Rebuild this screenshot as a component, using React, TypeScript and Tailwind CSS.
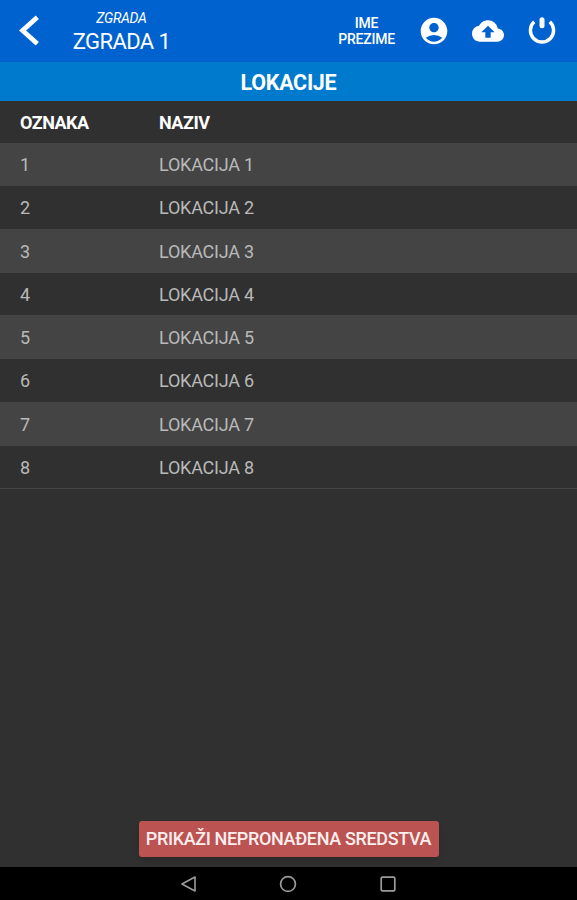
import React from "react";
import { MdAccountCircle, MdCloudUpload } from "react-icons/md";

const locations = [
  { id: 1, name: "LOKACIJA 1" },
  { id: 2, name: "LOKACIJA 2" },
  { id: 3, name: "LOKACIJA 3" },
  { id: 4, name: "LOKACIJA 4" },
  { id: 5, name: "LOKACIJA 5" },
  { id: 6, name: "LOKACIJA 6" },
  { id: 7, name: "LOKACIJA 7" },
  { id: 8, name: "LOKACIJA 8" },
];

const Header: React.FC = () => (
  <header className="flex h-[62px] shrink-0 items-center bg-[#0062cf] text-white">
    <button className="ml-[19px] shrink-0" aria-label="Natrag">
      <svg width="22" height="34" viewBox="0 0 22 34" fill="none" className="block">
        <path d="M18.3 3.2 3.6 16.5 18.3 29.8" stroke="currentColor" strokeWidth="4.8" />
      </svg>
    </button>

    <div className="ml-8 flex w-[97px] flex-col items-center pt-[3px] whitespace-nowrap">
      <span className="text-[14px] leading-[18px] tracking-[-0.3px] italic">ZGRADA</span>
      <span className="text-[22px] leading-[30px] tracking-[-0.6px]">ZGRADA 1</span>
    </div>

    <div className="mr-[19px] ml-auto flex items-center">
      <div className="mr-[23px] text-center text-[14px] leading-4 font-medium tracking-[-0.2px]">
        IME
        <br />
        PREZIME
      </div>
      <MdAccountCircle className="mr-[22px] h-8 w-8" />
      <MdCloudUpload className="mr-[22px] h-8 w-8" />
      {/* Power */}
      <svg width="32" height="32" viewBox="0 0 32 32" fill="none" stroke="currentColor">
        <path d="M8.2 6.8a11.6 11.6 0 1 0 15.6 0" strokeWidth="3.4" />
        <path d="M16 4.7v6" strokeWidth="5" strokeLinecap="round" />
      </svg>
    </div>
  </header>
);

const LocationTable: React.FC = () => (
  <div className="text-[18px]">
    <div className="flex h-[42.5px] items-center pt-[2px] pl-5 font-bold tracking-[-0.5px] text-white">
      <div className="w-[139px]">OZNAKA</div>
      <div>NAZIV</div>
    </div>
    {locations.map((location) => (
      <div
        key={location.id}
        className="flex h-[43.25px] items-center border-b border-[#444444] pt-[1px] pl-5 tracking-[-0.22px] text-[#b9b9b9] odd:bg-[#303030] even:bg-[#444444]"
      >
        <div className="w-[139px]">{location.id}</div>
        <div>{location.name}</div>
      </div>
    ))}
  </div>
);

const NavigationBar: React.FC = () => (
  <nav className="flex h-[33px] shrink-0 items-center justify-center gap-[82px] bg-black pr-[2px] text-[#9b9b9b]">
    <svg width="18" height="18" viewBox="0 0 18 18" fill="none" stroke="currentColor" strokeWidth="1.6">
      <path d="M16 2v14L3 9Z" strokeLinejoin="round" />
    </svg>
    <svg width="18" height="18" viewBox="0 0 18 18" fill="none" stroke="currentColor" strokeWidth="1.7">
      <circle cx="9" cy="9" r="7.4" />
    </svg>
    <svg width="18" height="18" viewBox="0 0 18 18" fill="none" stroke="currentColor" strokeWidth="1.7">
      <rect x="2.2" y="2.2" width="13.6" height="13.6" rx="1" />
    </svg>
  </nav>
);

const App: React.FC = () => {
  return (
    <div className="flex h-[900px] w-[577px] flex-col overflow-hidden bg-[#303030] font-['Roboto',sans-serif]">
      <Header />
      <h1 className="flex h-[38.5px] shrink-0 items-center justify-center bg-[#007acd] pt-[3px] text-[21.5px] font-bold tracking-[-0.3px] text-white">
        LOKACIJE
      </h1>

      <main className="flex flex-1 flex-col items-center">
        <div className="w-full">
          <LocationTable />
        </div>
        <button className="mt-auto mb-[10.5px] flex h-[36px] w-[300px] items-center justify-center rounded-[3px] bg-[#ba5351] pb-[1px] text-[18px] font-medium tracking-[-0.35px] whitespace-nowrap text-[#fdeeee] shadow-md">
          PRIKAŽI NEPRONAĐENA SREDSTVA
        </button>
      </main>

      <NavigationBar />
    </div>
  );
};

export default App;
